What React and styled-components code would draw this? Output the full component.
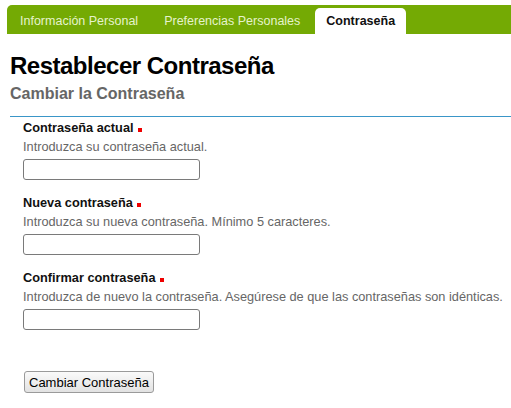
import React from 'react';
import styled, { createGlobalStyle } from 'styled-components';

const GlobalStyle = createGlobalStyle`
  body {
    margin: 0;
    background: #fff;
    font-family: "Liberation Sans", Arial, sans-serif;
  }
`;

const Page = styled.div`
  padding: 5px 0 0 7px;
`;

const TabBar = styled.nav`
  display: flex;
  align-items: flex-end;
  gap: 4px;
  height: 29px;
  padding-left: 2px;
  background-color: #74aa04;
  border-radius: 5px 0 0 0;
`;

const Tab = styled.a`
  display: block;
  height: 25px;
  padding: 1px 11px 0;
  line-height: 25px;
  font-size: 12.5px;
  text-decoration: none;
  white-space: nowrap;
  color: ${props => (props.$active ? '#111' : '#e6f3cc')};
  font-weight: ${props => (props.$active ? 'bold' : 'normal')};
  background: ${props => (props.$active ? '#fff' : 'transparent')};
  border-radius: 5px 5px 0 0;
`;

const Content = styled.div`
  margin-left: 3px;
`;

const Title = styled.h1`
  margin: 18px 0 0;
  font-size: 24px;
  line-height: 28px;
  letter-spacing: -0.5px;
  font-weight: bold;
  color: #000;
`;

const Subtitle = styled.h2`
  margin: 4px 0 0;
  font-size: 16px;
  line-height: 20px;
  font-weight: bold;
  color: #666;
`;

const Divider = styled.hr`
  margin: 12px 0 0;
  border: 0;
  border-top: 1px solid #3a96c8;
`;

const Form = styled.form`
  padding: 1px 0 0 13px;
`;

const Field = styled.div`
  margin-bottom: 13px;
  &:last-of-type {
    margin-bottom: 0;
  }
`;

const Label = styled.label`
  display: block;
  font-size: 12.75px;
  line-height: 19px;
  font-weight: bold;
  color: #111;
`;

const Required = styled.span`
  display: inline-block;
  width: 4px;
  height: 4px;
  margin-left: 4px;
  background: #e00;
`;

const Hint = styled.div`
  font-size: 12.75px;
  line-height: 19px;
  color: #666;
  white-space: nowrap;
`;

const Input = styled.input`
  display: block;
  box-sizing: border-box;
  width: 177px;
  height: 21px;
  margin-top: 3px;
  border: 1px solid #7a7a7a;
  border-radius: 3px;
  background: #fff;
`;

const SubmitButton = styled.button`
  display: block;
  box-sizing: border-box;
  height: 22px;
  margin: 41px 0 0 1px;
  padding: 0 4px;
  font-family: "Liberation Sans", Arial, sans-serif;
  font-size: 13px;
  color: #000;
  border: 1px solid #9a9a9a;
  border-radius: 3px;
  background: linear-gradient(#fafafa, #e2e2e2);
`;

const fields = [
  { id: 'actual', label: 'Contraseña actual', hint: 'Introduzca su contraseña actual.' },
  { id: 'nueva', label: 'Nueva contraseña', hint: 'Introduzca su nueva contraseña. Mínimo 5 caracteres.' },
  {
    id: 'confirmar',
    label: 'Confirmar contraseña',
    hint: 'Introduzca de nuevo la contraseña. Asegúrese de que las contraseñas son idénticas.',
  },
];

export default function App() {
  return (
    <Page>
      <GlobalStyle />
      <TabBar>
        <Tab>Información Personal</Tab>
        <Tab>Preferencias Personales</Tab>
        <Tab $active>Contraseña</Tab>
      </TabBar>
      <Content>
        <Title>Restablecer Contraseña</Title>
        <Subtitle>Cambiar la Contraseña</Subtitle>
        <Divider />
        <Form onSubmit={e => e.preventDefault()}>
          {fields.map(f => (
            <Field key={f.id}>
              <Label htmlFor={f.id}>
                {f.label}
                <Required />
              </Label>
              <Hint>{f.hint}</Hint>
              <Input id={f.id} type="password" />
            </Field>
          ))}
          <SubmitButton type="submit">Cambiar Contraseña</SubmitButton>
        </Form>
      </Content>
    </Page>
  );
}
